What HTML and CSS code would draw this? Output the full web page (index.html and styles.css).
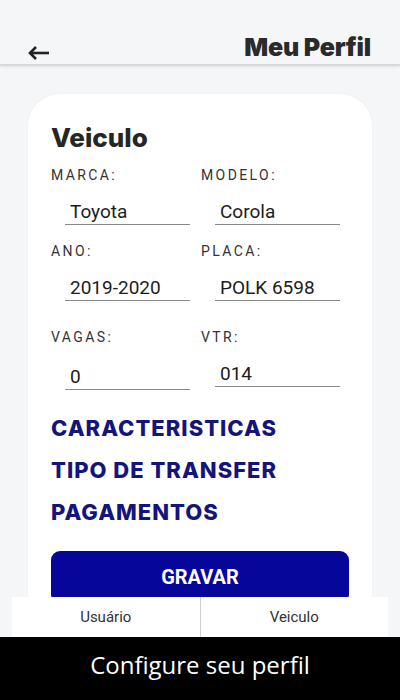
FILE: index.html
```html
<!DOCTYPE html>
<html lang="pt">

<head>
    <meta charset="UTF-8">
    <meta name="viewport" content="width=device-width, initial-scale=1.0">
    <title>Meu Perfil</title>
    <link rel="stylesheet" href="styles.css">
</head>

<body>
    <div class="screen">
        <div class="header">
            <svg class="back" width="22" height="14" viewBox="0 0 22 14">
                <path d="M8 1 L2 7 L8 13" fill="none" stroke="#222" stroke-width="2.6" stroke-linejoin="miter"/>
                <line x1="2" y1="7" x2="21" y2="7" stroke="#222" stroke-width="2.6"/>
            </svg>
            <h1 class="title">Meu Perfil</h1>
        </div>

        <div class="main">
            <div class="card">
                <h2 class="card-title">Veiculo</h2>

                <div class="fields">
                    <div class="field">
                        <div class="label">MARCA:</div>
                        <div class="value">Toyota</div>
                    </div>
                    <div class="field">
                        <div class="label">MODELO:</div>
                        <div class="value">Corola</div>
                    </div>
                    <div class="field">
                        <div class="label">ANO:</div>
                        <div class="value">2019-2020</div>
                    </div>
                    <div class="field">
                        <div class="label">PLACA:</div>
                        <div class="value">POLK 6598</div>
                    </div>
                    <div class="field field-gap">
                        <div class="label">VAGAS:</div>
                        <div class="value value-down">0</div>
                    </div>
                    <div class="field field-gap">
                        <div class="label">VTR:</div>
                        <div class="value">014</div>
                    </div>
                </div>

                <div class="links">
                    <a class="link">CARACTERISTICAS</a>
                    <a class="link">TIPO DE TRANSFER</a>
                    <a class="link">PAGAMENTOS</a>
                </div>

                <button class="save">GRAVAR</button>
            </div>
        </div>

        <div class="tabs">
            <div class="tab">Usuário</div>
            <div class="tab">Veiculo</div>
        </div>

        <div class="caption">Configure seu perfil</div>
    </div>
</body>

</html>
```

FILE: styles.css
```css
body {
    margin: 0;
    background-color: #f5f6f8;
    font-family: Roboto, "Liberation Sans", sans-serif;
}

.screen {
    display: flex;
    flex-direction: column;
    height: 700px;
    overflow: hidden;
}

.header {
    height: 64px;
    flex: none;
    display: flex;
    align-items: flex-end;
    justify-content: space-between;
    padding: 0 29px 0 28px;
    border-bottom: 2px solid #d9d9db;
    box-shadow: 0 1px 3px rgba(0, 0, 0, 0.08);
}

.back {
    margin-bottom: 4px;
}

.title {
    margin: 0 0 2px;
    font-family: Inter, sans-serif;
    font-weight: 900;
    font-size: 25px;
    color: #2a2a2a;
    letter-spacing: -0.2px;
}

.main {
    flex: 1;
    overflow: hidden;
    padding: 28px 28px 0;
}

.card {
    background: white;
    border-radius: 32px 32px 0 0;
    padding: 29px 23px 40px;
    box-shadow: 0 0 2px rgba(0, 0, 0, 0.06);
}

.card-title {
    margin: 0;
    font-family: Inter, sans-serif;
    font-weight: 800;
    font-size: 26px;
    color: #262626;
    line-height: 30px;
}

.fields {
    display: grid;
    grid-template-columns: 150px 150px;
    margin-top: 10px;
}

.field-gap {
    margin-top: 10px;
}

.label {
    font-size: 14px;
    letter-spacing: 2.4px;
    color: #333;
    line-height: 24px;
}

.value {
    margin: 14px 0 14px 14px;
    width: 120px;
    padding: 0 0 1px 5px;
    border-bottom: 1.5px solid #8a8a8a;
    font-size: 19px;
    line-height: 22px;
    color: #1c1c1c;
}

.value-down {
    margin-top: 17px;
    margin-bottom: 11px;
}

.links {
    display: flex;
    flex-direction: column;
    gap: 17px;
    margin-top: 15px;
}

.link {
    font-family: Inter, sans-serif;
    font-weight: 800;
    font-size: 22px;
    line-height: 25px;
    letter-spacing: 1px;
    color: #14147a;
}

.save {
    display: block;
    width: 100%;
    height: 52px;
    margin-top: 26px;
    background-color: #06069a;
    color: white;
    border: none;
    border-radius: 9px;
    font-family: Roboto, sans-serif;
    font-weight: 700;
    font-size: 20px;
}

.tabs {
    flex: none;
    display: flex;
    height: 40px;
    margin: 0 12px;
    background: white;
}

.tab {
    flex: 1;
    display: flex;
    align-items: center;
    justify-content: center;
    font-size: 15px;
    color: #333;
}

.tab + .tab {
    border-left: 1px solid #cfcfcf;
}

.caption {
    flex: none;
    height: 63px;
    background: black;
    color: white;
    font-family: "Open Sans", sans-serif;
    font-size: 24px;
    text-align: center;
    line-height: 56px;
}
```
